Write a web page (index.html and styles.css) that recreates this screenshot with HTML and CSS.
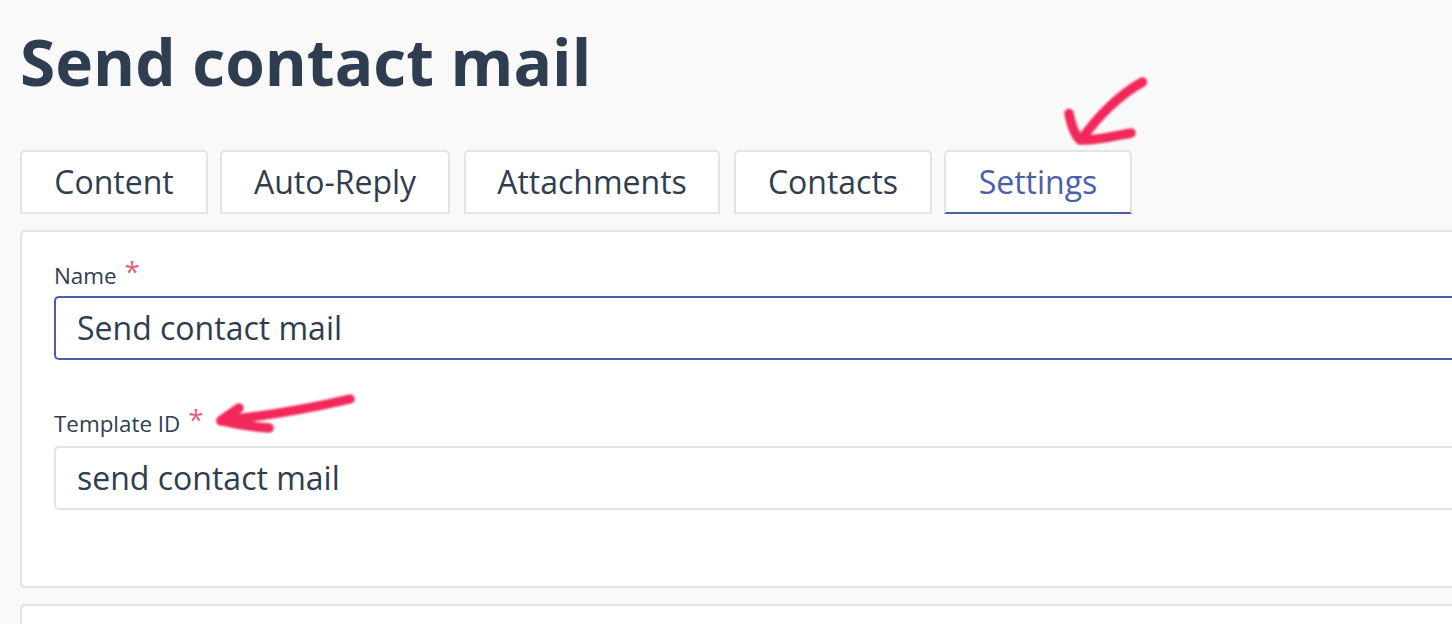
FILE: index.html
```
<!DOCTYPE html>
<html lang="en">
<head>
<meta charset="utf-8">
<title>Send contact mail</title>
<link rel="stylesheet" href="styles.css">
</head>
<body>
<main class="page">
  <h1 class="title">Send contact mail</h1>
  <nav class="tabs">
    <a class="tab tab-content">Content</a>
    <a class="tab tab-reply">Auto-Reply</a>
    <a class="tab tab-attachments">Attachments</a>
    <a class="tab tab-contacts">Contacts</a>
    <a class="tab tab-settings active">Settings</a>
  </nav>
  <section class="panel">
    <div class="field">
      <label class="label" for="name"><span>Name</span><span class="required">*</span></label>
      <input class="input focused" id="name" value="Send contact mail">
    </div>
    <div class="field">
      <label class="label label-tall" for="template"><span>Template ID</span><span class="required">*</span></label>
      <input class="input" id="template" value="send contact mail">
    </div>
  </section>
  <section class="panel panel-next"></section>
</main>
<svg class="marks" width="1452" height="624" viewBox="0 0 1452 624">
  <path d="M1142.500 82C1119 95 1097 117 1082 139"/>
  <path d="M1069 113.500C1071 124 1074 134 1080 140C1096 141 1114 136 1131 133"/>
  <path d="M350 399C312 408 264 416 221 421"/>
  <path d="M239 408L221 420.500C236 424.500 253 427 269 428"/>
</svg>
</body>
</html>
```
FILE: styles.css
```
* { box-sizing: border-box; }
body {
  margin: 0;
  height: 624px;
  overflow: hidden;
  background: #f9f9f9;
  color: #2f3d50;
  font-family: "Open Sans", sans-serif;
}
.page { height: 624px; padding: 18px 0 0 20px; overflow: hidden; }
.title {
  margin: 0;
  height: 132px;
  font-size: 64px;
  line-height: 88px;
  font-weight: 700;
  white-space: nowrap;
}
.tabs { display: flex; height: 64px; }
.tab {
  border: 2px solid #e4e4e4;
  border-radius: 5px 5px 0 0;
  background: #fff;
  font-size: 32px;
  line-height: 60px;
  text-align: center;
  white-space: nowrap;
}
.tab-content { width: 188px; margin-right: 12px; }
.tab-reply { width: 230px; margin-right: 14px; }
.tab-attachments { width: 256px; margin-right: 14px; }
.tab-contacts { width: 198px; margin-right: 12px; }
.tab-settings { width: 188px; }
.active { color: #4960a9; border-bottom-color: #4960a9; }
.panel {
  width: 1432px;
  height: 358px;
  margin: 16px 0 0;
  padding: 32px;
  padding-right: 0;
  border: 2px solid #e4e4e4;
  border-right: 0;
  border-radius: 5px 0 0 5px;
  background: #fff;
}
.panel-next {
  height: 20px;
  padding: 0;
  border-bottom: 0;
  border-radius: 5px 0 0 0;
}
.field { height: 148px; }
.label {
  display: flex;
  gap: 8px;
  height: 32px;
  font-size: 22.400px;
  line-height: 24px;
}
.label-tall { height: 34px; }
.required { color: #e06478; font-size: 28px; line-height: 14px; }
.input {
  display: block;
  width: 100%;
  height: 64px;
  padding: 0 21px 2px;
  border: 2px solid #e4e4e4;
  border-right: 0;
  border-radius: 5px 0 0 5px;
  outline: none;
  background: #fff;
  color: #2f3d50;
  font: 32px "Open Sans", sans-serif;
}
.focused { border-color: #4960a5; }
.marks {
  position: absolute;
  top: 0;
  left: 0;
  pointer-events: none;
  fill: none;
  stroke: #f12859;
  stroke-width: 9.500;
  stroke-linecap: round;
  stroke-linejoin: round;
  filter: blur(1.200px);
}
```
